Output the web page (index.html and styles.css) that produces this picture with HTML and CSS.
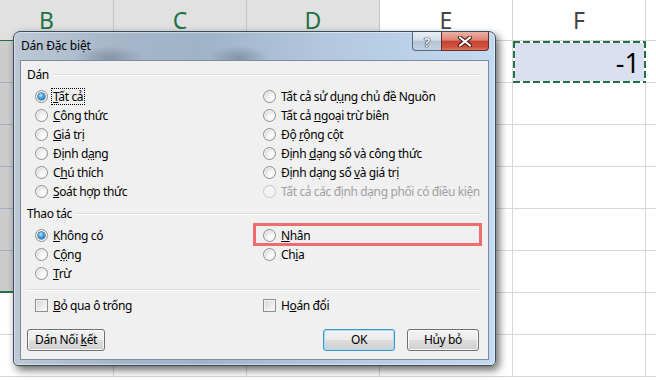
FILE: index.html
```html
<!DOCTYPE html>
<html lang="vi">
<head>
<meta charset="utf-8">
<title>Dán Đặc biệt</title>
<link rel="stylesheet" href="styles.css">
</head>
<body>
<div class="sheet">
  <div class="ch sel first">B</div><div class="ch sel">C</div><div class="ch sel">D</div><div class="ch">E</div><div class="ch">F</div><div class="ch"></div>

  <div class="c s"></div><div class="c s"></div><div class="c s"></div><div class="c"></div><div class="c act"><span>-1</span></div><div class="c"></div>
  <div class="c s"></div><div class="c s"></div><div class="c s"></div><div class="c"></div><div class="c"></div><div class="c"></div>
  <div class="c s"></div><div class="c s"></div><div class="c s"></div><div class="c"></div><div class="c"></div><div class="c"></div>
  <div class="c s"></div><div class="c s"></div><div class="c s"></div><div class="c"></div><div class="c"></div><div class="c"></div>
  <div class="c s"></div><div class="c s"></div><div class="c s"></div><div class="c"></div><div class="c"></div><div class="c"></div>
  <div class="c s last"></div><div class="c s last"></div><div class="c s last"></div><div class="c"></div><div class="c"></div><div class="c"></div>
  <div class="c"></div><div class="c"></div><div class="c"></div><div class="c"></div><div class="c"></div><div class="c"></div>
  <div class="c"></div><div class="c"></div><div class="c"></div><div class="c"></div><div class="c"></div><div class="c"></div>
</div>

<div class="dlg">
  <div class="titlebar">
    <div class="title">Dán Đặc biệt</div>
    <div class="tbtns">
      <div class="tb help">?</div>
      <div class="tb close">
        <svg width="16" height="11" viewBox="0 0 16 11"><path d="M3 1.5 L13 9.5 M13 1.5 L3 9.5" stroke="#4a1d16" stroke-width="4.2" stroke-linecap="round"/><path d="M3 1.5 L13 9.5 M13 1.5 L3 9.5" stroke="#ffffff" stroke-width="2.2" stroke-linecap="round"/></svg>
      </div>
    </div>
  </div>
  <div class="client">
    <div class="group"><span>Dán</span></div>
    <div class="opts">
      <div class="opt"><i class="rb on"></i><span class="lb focus"><u>T</u>ất cả</span></div>
      <div class="opt"><i class="rb"></i><span class="lb">Tất cả sử d<u>ụ</u>ng chủ đề Nguồn</span></div>
      <div class="opt"><i class="rb"></i><span class="lb"><u>C</u>ông thức</span></div>
      <div class="opt"><i class="rb"></i><span class="lb">Tất cả <u>n</u>goại trừ biên</span></div>
      <div class="opt"><i class="rb"></i><span class="lb"><u>G</u>iá trị</span></div>
      <div class="opt"><i class="rb"></i><span class="lb">Độ <u>r</u>ộng cột</span></div>
      <div class="opt"><i class="rb"></i><span class="lb">Định d<u>ạ</u>ng</span></div>
      <div class="opt"><i class="rb"></i><span class="lb">Định <u>d</u>ạng số và công thức</span></div>
      <div class="opt"><i class="rb"></i><span class="lb">C<u>h</u>ú thích</span></div>
      <div class="opt"><i class="rb"></i><span class="lb">Định dạng số <u>v</u>à giá trị</span></div>
      <div class="opt"><i class="rb"></i><span class="lb"><u>S</u>oát hợp thức</span></div>
      <div class="opt off"><i class="rb"></i><span class="lb">Tất cả các định dạng phối có điều kiện</span></div>
    </div>
    <div class="group g2"><span>Thao tác</span></div>
    <div class="opts">
      <div class="opt"><i class="rb on"></i><span class="lb"><u>K</u>hông có</span></div>
      <div class="opt"><i class="rb"></i><span class="lb"><u>N</u>hân</span></div>
      <div class="opt"><i class="rb"></i><span class="lb">C<u>ộ</u>ng</span></div>
      <div class="opt"><i class="rb"></i><span class="lb">Ch<u>i</u>a</span></div>
      <div class="opt"><i class="rb"></i><span class="lb"><u>T</u>rừ</span></div>
    </div>
    <div class="sep"></div>
    <div class="opts checks">
      <div class="opt"><i class="cb"></i><span class="lb"><u>B</u>ỏ qua ô trống</span></div>
      <div class="opt"><i class="cb"></i><span class="lb">H<u>o</u>án đổi</span></div>
    </div>
    <div class="btns">
      <div class="btn link"><span>Dán Nối <u>k</u>ết</span></div>
      <div class="btn ok"><span>OK</span></div>
      <div class="btn cancel"><span>Hủy bỏ</span></div>
    </div>
  </div>
</div>

<div class="mark"></div>
</body>
</html>
```

FILE: styles.css
```css
* { box-sizing: border-box; }
html, body { margin: 0; padding: 0; }
body {
  width: 656px;
  height: 380px;
  overflow: hidden;
  position: relative;
  background: #ffffff;
  font-family: "Noto Sans", "Open Sans", sans-serif;
}

/* spreadsheet */
.sheet {
  display: grid;
  grid-template-columns: 114px repeat(5, 133px);
  grid-template-rows: 41px repeat(8, 42px);
  width: 656px;
  height: 380px;
  overflow: hidden;
}
.ch {
  border-right: 1px solid #d4d4d4;
  border-bottom: 1px solid #d4d4d4;
  display: flex;
  align-items: center;
  justify-content: center;
  font-size: 23px;
  color: #444444;
  background: #ffffff;
  padding-bottom: 1px;
}
.ch.sel {
  background: #e1e1e1;
  color: #217346;
  border-right-color: #c4c4c4;
  border-bottom: 1px solid #217346;
}
.ch.first { padding-right: 20px; }
.c {
  border-right: 1px solid #d8d8d8;
  border-bottom: 1px solid #d8d8d8;
}
.c.s {
  background: #cccccc;
  border-bottom-color: #a4adc2;
  border-right-color: #b8b8b8;
}
.c.s.last { border-bottom: 2px solid #217346; }
.c.act {
  display: flex;
  align-items: flex-end;
  justify-content: flex-end;
  padding: 0 6px 5px 0;
  font-size: 27px;
  line-height: 30px;
  color: #000;
  background:
    repeating-linear-gradient(90deg, #217346 0 7px, #ffffff 7px 10px) top left / 100% 2px no-repeat,
    repeating-linear-gradient(90deg, #217346 0 7px, #ffffff 7px 10px) bottom left / 100% 2px no-repeat,
    repeating-linear-gradient(180deg, #217346 0 7px, #ffffff 7px 10px) top left / 2px 100% no-repeat,
    repeating-linear-gradient(180deg, #217346 0 7px, #ffffff 7px 10px) top right / 2px 100% no-repeat,
    #dbe0f1;
  border: none;
}

/* dialog */
.dlg {
  position: absolute;
  left: 13px;
  top: 31px;
  width: 483px;
  height: 335px;
  border: 1px solid #3d4b5b;
  border-radius: 7px 7px 5px 5px;
  box-shadow: 3px 4px 9px rgba(0, 0, 0, 0.6), inset 0 0 0 1px rgba(255, 255, 255, 0.45);
  background:
    radial-gradient(ellipse 34px 12px at 95px 26px, rgba(70, 80, 92, 0.35), transparent),
    radial-gradient(ellipse 30px 12px at 225px 26px, rgba(70, 80, 92, 0.35), transparent),
    linear-gradient(90deg, #bcc8d5 0%, #a5b6c9 22%, #9fb3c9 40%, #b3c8de 65%, #c4daf1 100%);
  display: flex;
  flex-direction: column;
  padding: 0 6px 5px 6px;
}
.titlebar {
  height: 28px;
  display: flex;
  align-items: flex-start;
  flex: none;
}
.title {
  margin: 6px 0 0 1px;
  font-size: 12px;
  line-height: 16px;
  color: #000;
  letter-spacing: -0.2px;
}
.tbtns {
  margin-left: auto;
  display: flex;
}
.tb {
  height: 19px;
  display: flex;
  align-items: center;
  justify-content: center;
  border: 1px solid #5a6878;
  border-top: none;
}
.help {
  width: 29px;
  border-right: none;
  border-radius: 0 0 0 4px;
  background: linear-gradient(#e6edf5 0%, #d3dee9 45%, #b5c5d7 52%, #c3d2e2 100%);
  font-weight: bold;
  font-size: 13px;
  color: #f4f6f8;
  text-shadow: 0 0 1px #1c2530, 0 0 1px #1c2530, 0 0 1px #1c2530;
  padding-top: 1px;
}
.close {
  width: 48px;
  border-color: #6a2b22;
  border-radius: 0 0 4px 0;
  background: linear-gradient(#eab2a6 0%, #dc8575 45%, #c64331 52%, #cf5541 85%, #e07a62 100%);
}

.client {
  flex: 1;
  border: 1px solid #7d8a99;
  background: #f0f0f0;
  display: flex;
  flex-direction: column;
  padding: 0 7px 0 6px;
  font-size: 12px;
  letter-spacing: -0.38px;
  color: #000;
}
.group {
  margin-top: 6px;
  height: 16px;
  line-height: 16px;
  display: flex;
  align-items: center;
  gap: 3px;
}
.group::after {
  content: "";
  flex: 1;
  border-top: 1px solid #d5dfe5;
  border-bottom: 1px solid #ffffff;
}
.g2 { margin-top: 5px; }
.opts {
  display: grid;
  grid-template-columns: 228px 1fr;
  grid-auto-rows: 19px;
  margin: 4px 0 0 8px;
}
.opt {
  display: flex;
  align-items: center;
  gap: 4px;
  white-space: nowrap;
}
.lb {
  padding: 0 1px;
  line-height: 15px;
}
.lb.focus { outline: 1px dotted #000; }
.opt.off .lb { color: #a0a0a0; }

.rb {
  width: 13px;
  height: 13px;
  flex: none;
  border-radius: 50%;
  border: 1px solid #8e8f8f;
  background: radial-gradient(circle at 65% 65%, #ffffff 0%, #f3f3f3 35%, #d2d2d2 80%);
  box-shadow: inset 0 0 0 1px #f7f7f7;
  display: flex;
  align-items: center;
  justify-content: center;
}
.rb.on::after {
  content: "";
  width: 7px;
  height: 7px;
  border-radius: 50%;
  background: radial-gradient(circle at 40% 35%, #b9e6ff 0%, #3b9ee0 45%, #135a95 100%);
  box-shadow: 0 0 0 0.5px #0c3f6d;
}
.opt.off .rb {
  border-color: #c6c6c6;
  background: #f4f4f4;
  box-shadow: none;
}

.sep {
  margin-top: 6px;
  border-top: 1px solid #d5dfe5;
  border-bottom: 1px solid #ffffff;
}
.checks { margin-top: 5px; }
.cb {
  width: 13px;
  height: 13px;
  flex: none;
  border: 1px solid #8e8f8f;
  box-shadow: inset 0 0 0 1px #f4f4f4;
  background: linear-gradient(135deg, #d6d6d6 0%, #f0f0f0 70%, #fbfbfb 100%);
}

.btns {
  margin-top: 14px;
  display: flex;
  gap: 12px;
  padding-right: 2px;
}
.btn {
  height: 22px;
  border: 1px solid #707070;
  border-radius: 3px;
  background: linear-gradient(#f2f2f2 0%, #ebebeb 48%, #dddddd 52%, #cfcfcf 100%);
  box-shadow: inset 0 0 0 1px rgba(255, 255, 255, 0.85);
  display: flex;
  align-items: center;
  justify-content: center;
  font-size: 12px;
  line-height: 16px;
}
.link { width: 78px; }
.ok {
  width: 72px;
  margin-left: auto;
  border-color: #3c94c8;
  box-shadow: inset 0 0 0 1px #a9dcf5;
}
.cancel { width: 72px; }

/* annotation */
.mark {
  position: absolute;
  left: 253px;
  top: 223px;
  width: 229px;
  height: 23px;
  border: 3px solid #f06b6b;
}
```
